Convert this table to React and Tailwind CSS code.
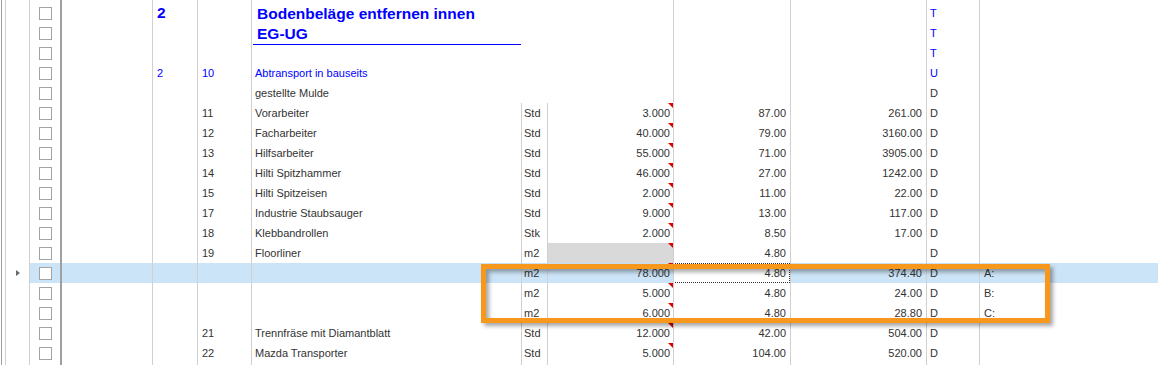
import React from "react";

const LINE = "border-r border-[#d0d0d0]";

const rows = [
  { type: "T", typeBlue: true, merged: true },
  { type: "T", typeBlue: true, merged: true },
  { type: "T", typeBlue: true, merged: true },
  { c2: "2", pos: "10", text: "Abtransport in bauseits", blue: true, type: "U", typeBlue: true, merged: true },
  { text: "gestellte Mulde", type: "D", merged: true },
  { pos: "11", text: "Vorarbeiter", unit: "Std", qty: "3.000", price: "87.00", total: "261.00", type: "D" },
  { pos: "12", text: "Facharbeiter", unit: "Std", qty: "40.000", price: "79.00", total: "3160.00", type: "D" },
  { pos: "13", text: "Hilfsarbeiter", unit: "Std", qty: "55.000", price: "71.00", total: "3905.00", type: "D" },
  { pos: "14", text: "Hilti Spitzhammer", unit: "Std", qty: "46.000", price: "27.00", total: "1242.00", type: "D" },
  { pos: "15", text: "Hilti Spitzeisen", unit: "Std", qty: "2.000", price: "11.00", total: "22.00", type: "D" },
  { pos: "17", text: "Industrie Staubsauger", unit: "Std", qty: "9.000", price: "13.00", total: "117.00", type: "D" },
  { pos: "18", text: "Klebbandrollen", unit: "Stk", qty: "2.000", price: "8.50", total: "17.00", type: "D" },
  { pos: "19", text: "Floorliner", unit: "m2", qty: "", gray: true, price: "4.80", total: "", type: "D" },
  { unit: "m2", qty: "78.000", price: "4.80", total: "374.40", type: "D", note: "A:", current: true },
  { unit: "m2", qty: "5.000", price: "4.80", total: "24.00", type: "D", note: "B:" },
  { unit: "m2", qty: "6.000", price: "4.80", total: "28.80", type: "D", note: "C:" },
  { pos: "21", text: "Trennfräse mit Diamantblatt", unit: "Std", qty: "12.000", price: "42.00", total: "504.00", type: "D" },
  { pos: "22", text: "Mazda Transporter", unit: "Std", qty: "5.000", price: "104.00", total: "520.00", type: "D" },
  { unit: "", type: "" },
];

const Checkbox = () => (
  <div className="w-[13px] h-[13px] border border-[#a3a3a3] bg-white" />
);

// one grid line; title rows get a height of 40px and a merged text cell
const Row = ({ r = {}, h = "h-[20px]", title = false, spacer = false }) => {
  const hasQty = r.qty !== undefined;
  return (
    <div className={`flex ${h} shrink-0`}>
      <div className="ml-px w-[5px] shrink-0 border-x border-l-[#a0a0a0] border-r-[#d0d0d0]" />
      <div className={`w-[24px] shrink-0 ${LINE} flex items-center pl-[10px]`}>
        {r.current && (
          <div className="w-0 h-0 border-y-[3px] border-y-transparent border-l-[4px] border-l-[#6a6a6a]" />
        )}
      </div>
      <div className={`flex flex-1 ${r.current ? "bg-[#cce4f7]" : ""}`}>
        <div className="w-[32px] shrink-0 border-r-2 border-[#a0a0a0] flex flex-col items-center">
          {!spacer && (
            <div className="h-[20px] flex items-center">
              <Checkbox />
            </div>
          )}
          {title && (
            <div className="h-[20px] flex items-center">
              <Checkbox />
            </div>
          )}
        </div>
        <div className={`w-[91px] shrink-0 ${LINE}`} />
        <div className={`w-[45px] shrink-0 ${LINE} pl-[4px] text-[#0000ff]`}>
          {title ? (
            <span className="text-[15.5px] font-bold leading-[20px]">2</span>
          ) : (
            r.c2
          )}
        </div>
        <div className={`w-[54px] shrink-0 ${LINE} pl-[4px] ${r.blue ? "text-[#0000ff]" : ""}`}>
          {r.pos}
        </div>
        {r.merged ? (
          <div className="w-[296px] shrink-0 pl-px">
            {title ? (
              <div className="w-[268px] h-[42px] pl-[4px] pt-px border-b border-[#0000ff] text-[15.5px] font-bold leading-[20px] text-[#0000ff]">
                Bodenbeläge entfernen innen
                <br />
                EG-UG
              </div>
            ) : (
              <span className={`pl-[2px] ${r.blue ? "text-[#0000ff]" : ""}`}>{r.text}</span>
            )}
          </div>
        ) : (
          <>
            <div className={`w-[270px] shrink-0 ${LINE} pl-[3px]`}>{r.text}</div>
            <div className={`w-[26px] shrink-0 ${LINE} pl-[2px]`}>{r.unit}</div>
          </>
        )}
        <div
          className={`relative w-[126px] shrink-0 ${LINE} text-right pr-[3px] ${
            r.gray ? "bg-[#d9d9d9]" : ""
          }`}
        >
          {r.qty}
          {hasQty && (
            <div className="absolute top-0 right-0 w-0 h-0 border-t-[5px] border-l-[5px] border-t-[#e00000] border-l-transparent" />
          )}
        </div>
        <div className={`w-[117px] shrink-0 ${LINE}`}>
          {r.current ? (
            <div className="-ml-px h-full border border-dotted border-[#333] bg-white text-right pr-[3px] leading-[18px]">
              {r.price}
            </div>
          ) : (
            <div className="text-right pr-[4px]">{r.price}</div>
          )}
        </div>
        <div className={`w-[136px] shrink-0 ${LINE} text-right pr-[4px]`}>{r.total}</div>
        <div className={`w-[53px] shrink-0 ${LINE} pl-[3px] ${r.typeBlue ? "text-[#0000ff]" : ""}`}>
          {title ? (
            <>
              <div>T</div>
              <div>T</div>
            </>
          ) : (
            r.type
          )}
        </div>
        <div className="flex-1 pl-[4px]">{r.note}</div>
      </div>
    </div>
  );
};

export default function App() {
  return (
    <div className="relative w-[1158px] h-[365px] overflow-hidden bg-white font-['Liberation_Sans',Arial,sans-serif] text-[11px] leading-[20px] text-[#333] whitespace-nowrap">
      <div className="flex flex-col">
        <Row h="h-[3px]" spacer r={{ merged: true }} />
        <Row h="h-[40px]" title r={{ merged: true, typeBlue: true }} />
        {rows.slice(2).map((r, i) => (
          <Row key={i} r={r} />
        ))}
      </div>

      {/* highlight frame drawn over the grid */}
      <div className="absolute left-[481px] top-[264px] w-[569px] h-[59px] border-[5px] border-[#f7981d] shadow-[3px_3px_4px_rgba(0,0,0,0.35),inset_3px_3px_4px_rgba(0,0,0,0.35)]" />
    </div>
  );
}
